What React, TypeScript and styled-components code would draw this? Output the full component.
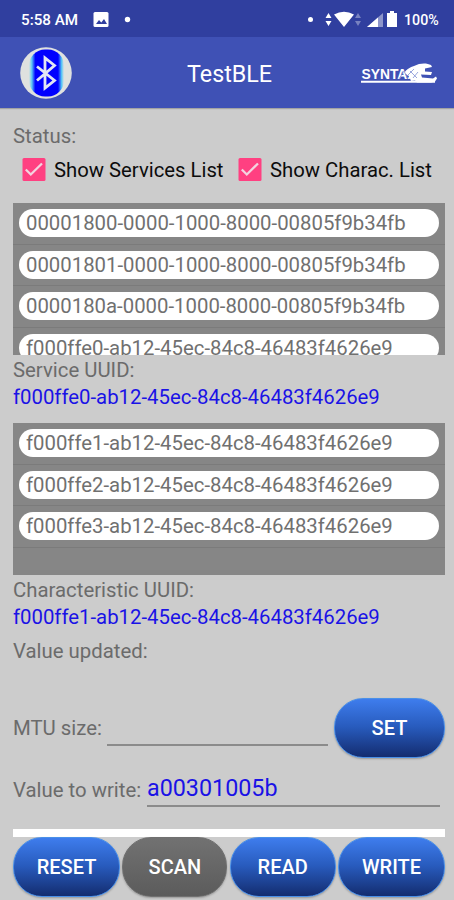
import React from "react";
import styled, { createGlobalStyle } from "styled-components";

const GlobalStyle = createGlobalStyle`
  * { box-sizing: border-box; }
  body { margin: 0; background: #cccccc; }
`;

const Screen = styled.div`
  width: 454px;
  height: 900px;
  display: flex;
  flex-direction: column;
  overflow: hidden;
  background: #cccccc;
  color: #6b6b6b;
  font-family: Roboto, sans-serif;
  font-size: 20.35px;
  line-height: 24px;
  white-space: nowrap;
`;

const StatusBar = styled.div`
  height: 37px;
  flex: none;
  display: flex;
  align-items: center;
  padding: 2px 15px 0 21px;
  background: #303f9f;
  color: #ffffff;
  font-size: 15.2px;
  font-weight: 500;
`;

const Clock = styled.span`
  width: 72px;
`;

const Battery = styled.span`
  font-size: 14.2px;
  width: 35px;
`;

const StatusIcons = styled.svg`
  flex: none;
  display: block;
`;

const Spacer = styled.div`
  flex: 1;
`;

const AppBar = styled.header`
  height: 71px;
  flex: none;
  display: grid;
  grid-template-columns: 52px 1fr 78px;
  align-items: center;
  padding: 0 15px 0 20px;
  background: #3f51b5;
  box-shadow: 0 1px 1px rgba(0, 0, 0, 0.2);
`;

const Title = styled.h1`
  margin: 3px 0 0 115px;
  color: #ffffff;
  font-size: 23.3px;
  line-height: 28px;
  font-weight: 400;
`;

const Content = styled.main`
  flex: 1;
  display: flex;
  flex-direction: column;
  padding: 16px 9px 3px 13px;
`;

const Label = styled.div`
  flex: none;
`;

const Uuid = styled.div`
  height: 24px;
  color: #1a12e6;
  margin-top: 3px;
`;

const CheckRow = styled.div`
  display: flex;
  height: 44px;
  padding: 0 0 0 9px;
  align-items: center;
  color: #0c0c0c;
  font-size: 20.3px;
`;

const CheckLabel = styled.label<{ $width: number }>`
  display: flex;
  align-items: center;
  gap: 8px;
  width: ${({ $width }) => $width}px;
`;

const List = styled.ul`
  list-style: none;
  margin: 0 0 3px;
  padding: 0;
  height: 151.5px;
  flex: none;
  overflow: hidden;
  background: #868686;
`;

const Item = styled.li`
  height: 41.5px;
  padding: 6px 6px 0 6px;
  border-bottom: 1px solid #7b7b7b;
`;

const Pill = styled.div`
  height: 28px;
  line-height: 28px;
  border-radius: 14px;
  padding-left: 7px;
  background: #ffffff;
  color: #707070;
`;

const Group = styled.section<{ $gap: number }>`
  margin-top: ${({ $gap }) => $gap}px;
`;

const FieldRow = styled.div<{ $height: number; $top: number }>`
  height: ${({ $height }) => $height}px;
  margin-top: ${({ $top }) => $top}px;
  display: flex;
  flex: none;
  align-items: center;
`;

const Field = styled.div<{ $width: number; $height: number; $right?: number }>`
  width: ${({ $width }) => $width}px;
  height: ${({ $height }) => $height}px;
  margin-left: auto;
  margin-right: ${({ $right }) => $right ?? 0}px;
  border-bottom: 2px solid #8b8b8b;
  color: #1a12e6;
  font-size: 23.3px;
  line-height: 31px;
`;

const Button = styled.button<{ $gray?: boolean }>`
  height: 60px;
  padding: 0;
  border: 1.5px solid ${({ $gray }) => ($gray ? "#707070" : "#4a90e8")};
  border-radius: 29px;
  background: ${({ $gray }) =>
    $gray
      ? "linear-gradient(#727272, #5b5b5b)"
      : "linear-gradient(#3f7eef, #285bbd 48%, #132b6d)"};
  background-origin: border-box;
  box-shadow: 0 1px 2px rgba(0, 0, 0, 0.25);
  color: #ffffff;
  font-family: inherit;
  font-size: 20px;
  font-weight: 500;
`;

const SetButton = styled(Button)`
  width: 111px;
  margin-left: 6px;
`;

const Divider = styled.div`
  height: 8px;
  flex: none;
  margin-top: 24px;
  background: #ffffff;
`;

const Actions = styled.footer`
  display: grid;
  grid-template-columns: 107px 105px 106px 107px;
  justify-content: space-between;
`;

const CheckIcon = () => (
  <svg width="24" height="24" viewBox="0 0 24 24">
    <rect x="0.5" y="0" width="23" height="23" rx="1.5" fill="#ff4081" />
    <path d="M3.8 11.5l5 5L20 5.5" fill="none" stroke="#f3d3df" strokeWidth="2.3" />
  </svg>
);

const BluetoothLogo = () => (
  <svg width="52" height="52" viewBox="0 0 52 52">
    <defs>
      <linearGradient id="halo">
        <stop offset="0" stopColor="#dfe3df" />
        <stop offset="0.08" stopColor="#5cc8f6" />
        <stop offset="0.18" stopColor="#0000ff" />
        <stop offset="0.83" stopColor="#0000ff" />
        <stop offset="0.93" stopColor="#55c4f5" />
        <stop offset="1" stopColor="#dfe3df" />
      </linearGradient>
    </defs>
    <circle cx="26" cy="26" r="25.8" fill="#dfe1df" />
    <rect x="9" y="2.5" width="35" height="47" rx="16" fill="url(#halo)" />
    <path d="M17 19.5L34.5 33.5L25 41V11L34.5 18.5L17 33.5" fill="none" stroke="#e2e5f4" strokeWidth="2.8" />
  </svg>
);

const SyntaxLogo = () => (
  <svg width="78" height="24" viewBox="0 0 78 24">
    <text x="0.5" y="17.8" textLength="55" lengthAdjust="spacingAndGlyphs" fill="#fff" fontFamily="Liberation Sans, sans-serif" fontWeight="700" fontSize="14">SYNTAX</text>
    <path d="M43 12c3-4 6-6 10-7l5-2c5-1 9-.5 12 1l1 2-7 1.5v3l7 .5-1 3-10-.5 1 3 11 1 3-2 1 2-2 3-4 1H56l-2-2-4 .5-2-5z" fill="#fff" />
    <path d="M38 18l5-8 4 8M45 16l8-8M49 10l7 7M52 17l5-6" fill="none" stroke="#8290d4" strokeWidth="0.8" />
    <path d="M0 20.8h74" stroke="#fff" strokeWidth="2" />
  </svg>
);

const services = [
  "00001800-0000-1000-8000-00805f9b34fb",
  "00001801-0000-1000-8000-00805f9b34fb",
  "0000180a-0000-1000-8000-00805f9b34fb",
  "f000ffe0-ab12-45ec-84c8-46483f4626e9",
];

const characteristics = [
  "f000ffe1-ab12-45ec-84c8-46483f4626e9",
  "f000ffe2-ab12-45ec-84c8-46483f4626e9",
  "f000ffe3-ab12-45ec-84c8-46483f4626e9",
];

const UuidList = ({ items }: { items: string[] }) => (
  <List>
    {items.map((id) => (
      <Item key={id}>
        <Pill>{id}</Pill>
      </Item>
    ))}
  </List>
);

export default function App() {
  return (
    <>
      <GlobalStyle />
      <Screen>
        <StatusBar>
          <Clock>5:58 AM</Clock>
          <StatusIcons width="40" height="18" viewBox="0 0 40 18">
            <rect x="0.5" y="1" width="15" height="15" rx="1.5" fill="#fff" />
            <path d="M3 13l3-4 2.3 2.5L11 8l3 5z" fill="#303f9f" />
            <circle cx="34.5" cy="8.5" r="2.7" fill="#fff" />
          </StatusIcons>
          <Spacer />
          <StatusIcons width="97" height="18" viewBox="0 0 97 18">
            <g fill="#fff">
              <circle cx="3.5" cy="8.5" r="2.5" />
              <path d="M18.5 7l3-5 3 5zM18.5 10h6l-3 5zM27 3.5Q37-2 47 3.5L37 16z" />
              <path d="M60 16L76 2v14z" opacity="0.45" />
              <path d="M60 16L71 6.4V16zM80 2h3V0h4v2h3v14H80z" />
              <path d="M48 7l3-5 3 5zM48 10h6l-3 5z" opacity="0.35" />
            </g>
          </StatusIcons>
          <Battery>100%</Battery>
        </StatusBar>
        <AppBar>
          <BluetoothLogo />
          <Title>TestBLE</Title>
          <SyntaxLogo />
        </AppBar>
        <Content>
          <Label>Status:</Label>
          <CheckRow>
            <CheckLabel $width={216}><CheckIcon />Show Services List</CheckLabel>
            <CheckLabel $width={200}><CheckIcon />Show Charac. List</CheckLabel>
          </CheckRow>
          <Group $gap={11}>
            <UuidList items={services} />
            <Label>Service UUID:</Label>
            <Uuid>f000ffe0-ab12-45ec-84c8-46483f4626e9</Uuid>
          </Group>
          <Group $gap={14.5}>
            <UuidList items={characteristics} />
            <Label>Characteristic UUID:</Label>
            <Uuid>f000ffe1-ab12-45ec-84c8-46483f4626e9</Uuid>
          </Group>
          <FieldRow $height={24} $top={10}><Label>Value updated:</Label></FieldRow>
          <FieldRow $height={60} $top={35.5}>
            <Label>MTU size:</Label>
            <Field $width={221} $height={35} />
            <SetButton>SET</SetButton>
          </FieldRow>
          <FieldRow $height={30} $top={16.5}>
            <Label>Value to write:</Label>
            <Field $width={293} $height={34} $right={5}>a00301005b</Field>
          </FieldRow>
          <Divider />
          <Actions>
            <Button>RESET</Button>
            <Button $gray>SCAN</Button>
            <Button>READ</Button>
            <Button>WRITE</Button>
          </Actions>
        </Content>
      </Screen>
    </>
  );
}
